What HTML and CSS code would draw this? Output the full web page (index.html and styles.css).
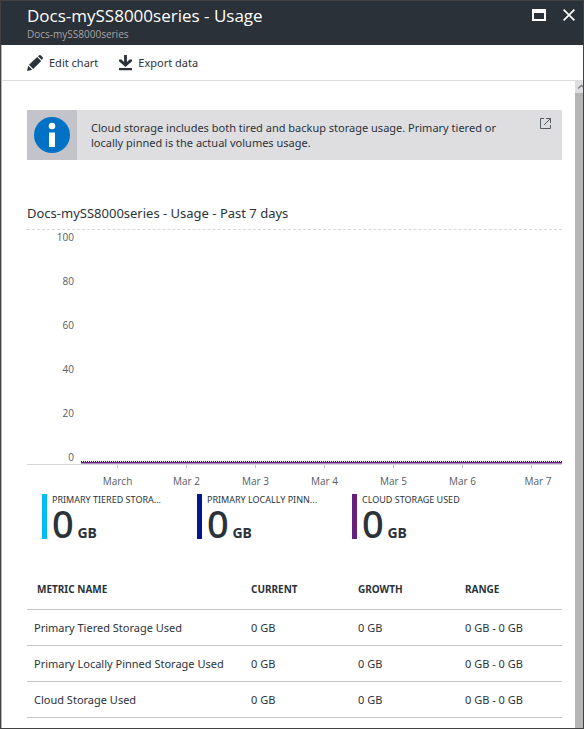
FILE: index.html
```html
<!DOCTYPE html>
<html lang="en">
<head>
<meta charset="utf-8">
<title>Docs-mySS8000series - Usage</title>
<link rel="stylesheet" href="styles.css">
</head>
<body>
<div class="blade">
  <header class="header">
    <div class="titles">
      <h1>Docs-mySS8000series - Usage</h1>
      <p>Docs-mySS8000series</p>
    </div>
    <button class="win" type="button" aria-label="Maximize">
      <svg width="14" height="12" viewBox="0 0 14 12"><path fill="#fff" fill-rule="evenodd" d="M0 0h14v12H0zM2 4v6h10V4z"/></svg>
    </button>
    <button class="win" type="button" aria-label="Close">
      <svg width="12" height="12" viewBox="0 0 12 12"><path stroke="#fff" stroke-width="1.7" d="M.6.6l10.8 10.8M11.4.6L.6 11.4"/></svg>
    </button>
  </header>
  <nav class="toolbar">
    <button type="button">
      <svg width="16" height="16" viewBox="0 0 16 16" fill="#2b333a"><path d="M0 16l1.2-5.2 4 4zM2 9.8L10.2 2l4 4L6.200 14zM11 1.200L12.200.3q.9-.6 1.800.2l1.500 1.500q.8.900.2 1.800L14.900 5z"/></svg>
      Edit chart
    </button>
    <button type="button">
      <svg width="13" height="16" viewBox="0 0 12 16" preserveAspectRatio="none" fill="#2b333a"><path d="M4.700 0h2.600v7l2.500-2.500H12v1.800L6 12 0 6.300V4.500h2.200L4.700 7zM0 13h12v2.300H0z"/></svg>
      Export data
    </button>
  </nav>
  <div class="body">
    <main class="content">
      <section class="info">
        <div class="info-icon">
          <svg width="36" height="36" viewBox="0 0 36 36"><circle cx="18" cy="18" r="18" fill="#0072c6"/><circle cx="18" cy="9" r="3.300" fill="#fff"/><path fill="#fff" d="M15 15.500h6V30h-6z"/></svg>
        </div>
        <p>Cloud storage includes both tired and backup storage usage. Primary tiered or locally pinned is the actual volumes usage.</p>
        <a href="#" aria-label="Open in new window">
          <svg width="11" height="11" viewBox="0 0 11 11" fill="none" stroke="#555c62"><path d="M4 .5H.5v10h10V7M6 .5h4.500V5M10.300.7L4 7"/></svg>
        </a>
      </section>
      <section class="chart">
        <h2>Docs-mySS8000series - Usage - Past 7 days</h2>
        <div class="plot">
          <div class="y-axis"><span>100</span><span>80</span><span>60</span><span>40</span><span>20</span><span>0</span></div>
          <div class="series"></div>
        </div>
        <div class="x-axis"><span>March</span><span>Mar 2</span><span>Mar 3</span><span>Mar 4</span><span>Mar 5</span><span>Mar 6</span><span class="last">Mar 7</span></div>
        <div class="legend">
          <div class="metric tiered"><h3>PRIMARY TIERED STORA...</h3><p><b>0</b> GB</p></div>
          <div class="metric pinned"><h3>PRIMARY LOCALLY PINN...</h3><p><b>0</b> GB</p></div>
          <div class="metric cloud"><h3>CLOUD STORAGE USED</h3><p><b>0</b> GB</p></div>
        </div>
      </section>
      <table>
        <thead><tr><th>METRIC NAME</th><th>CURRENT</th><th>GROWTH</th><th>RANGE</th></tr></thead>
        <tbody>
          <tr><td>Primary Tiered Storage Used</td><td>0 GB</td><td>0 GB</td><td>0 GB - 0 GB</td></tr>
          <tr><td>Primary Locally Pinned Storage Used</td><td>0 GB</td><td>0 GB</td><td>0 GB - 0 GB</td></tr>
          <tr><td>Cloud Storage Used</td><td>0 GB</td><td>0 GB</td><td>0 GB - 0 GB</td></tr>
        </tbody>
      </table>
    </main>
    <div class="scrollbar">
      <svg width="8" height="12" viewBox="0 0 8 12" fill="none" stroke="#7c8086" stroke-width="1.500"><path d="M3 7.500l3.500-3 3.500 3"/></svg>
    </div>
  </div>
</div>
</body>
</html>
```
FILE: styles.css
```css
* { box-sizing: border-box; }
body, h1, h2, h3, p { margin: 0; font-weight: 400; }
body {
  background: #fff;
  color: #2b333a;
  font: 11px/16px "Noto Sans", "Open Sans", sans-serif;
}
button {
  border: 0;
  padding: 0;
  background: none;
  color: inherit;
  font: inherit;
}
svg { display: block; }
.blade {
  display: flex;
  flex-direction: column;
  min-height: 100vh;
  border: 1px solid #424242;
}
.header {
  display: flex;
  align-items: flex-start;
  gap: 17px;
  height: 44px;
  padding: 4px 8px 0 26px;
  background: #2a3138;
  color: #fff;
  font-family: "Open Sans", "Noto Sans", sans-serif;
}
.titles { flex: 1; }
.titles h1 { font-size: 17px; line-height: 22px; }
.titles p { color: #aaa1a0; font-size: 10px; line-height: 14px; }
.win { margin-top: 4px; }
.toolbar {
  display: flex;
  gap: 21px;
  height: 36px;
  padding-left: 25px;
  border-left: 1px solid #b5b5b5;
  border-bottom: 1px solid #dcdcdc;
}
.toolbar button {
  display: flex;
  align-items: center;
  gap: 6px;
}
.body {
  display: flex;
  flex: 1;
  border-left: 1px solid #b5b5b5;
}
.content {
  flex: 1;
  min-width: 0;
  padding: 29px 13px 10px 25px;
}
.scrollbar {
  width: 8px;
  background: linear-gradient(#dedee2 12px, #b5b5b5 12px);
}
.info {
  display: flex;
  align-items: flex-start;
  min-height: 50px;
  background: #dedee1;
}
.info-icon { padding: 7px; background: #c3c3ca; }
.info p { flex: 1; padding: 10px 24px 0 14px; line-height: 15px; }
.info a { padding: 8px 11px 0 0; }
.chart h2 {
  margin-top: 43px;
  padding-bottom: 5px;
  border-bottom: 1px dashed #d8d8dc;
  font-size: 13px;
  line-height: 21px;
}
.plot {
  display: flex;
  align-items: flex-end;
  height: 235px;
  border-bottom: 1px solid #d6d6da;
}
.plot, .x-axis {
  color: #555c62;
  font: 10px/14px "Open Sans", "Noto Sans", sans-serif;
}
.y-axis {
  display: flex;
  flex-direction: column;
  justify-content: space-between;
  width: 47px;
  height: 100%;
  text-align: right;
}
.series {
  flex: 1;
  height: 3px;
  margin-left: 7px;
  border-top: 1px dotted #1b1464;
  border-bottom: 1px solid #a98bbd;
  background: #68217a;
  background-clip: padding-box;
}
.x-axis {
  display: grid;
  grid-template-columns: repeat(7, 1fr);
  margin: 0 -4px 0 56px;
  text-align: center;
}
.x-axis span {
  padding-top: 9px;
  background: linear-gradient(#c4c4c8, #c4c4c8) top / 1px 3px no-repeat;
}
.x-axis .last { padding-left: 13px; }
.legend {
  display: flex;
  gap: 30px;
  margin: 6px 0 0 15px;
}
.metric {
  width: 125px;
  height: 45px;
  padding-left: 5px;
  border-left: 5px solid;
  white-space: nowrap;
}
.metric h3 { font-size: 9px; line-height: 11px; }
.metric p {
  font-size: 14px;
  font-weight: 700;
  line-height: 36px;
}
.metric b { font-size: 38px; font-weight: 500; }
.tiered { border-color: #00bcf2; }
.pinned { border-color: #00188f; }
.cloud { border-color: #68217a; }
table {
  width: 100%;
  margin-top: 30px;
  border-collapse: collapse;
  table-layout: fixed;
}
th, td {
  height: 36px;
  padding: 1px 7px 0;
  border-bottom: 1px solid #c5c5cb;
  text-align: left;
  white-space: nowrap;
}
th { width: 107px; height: 40px; padding-top: 0; font-size: 10px; }
th:first-child { width: 217px; padding-left: 10px; }
th:last-child { width: auto; }
```
